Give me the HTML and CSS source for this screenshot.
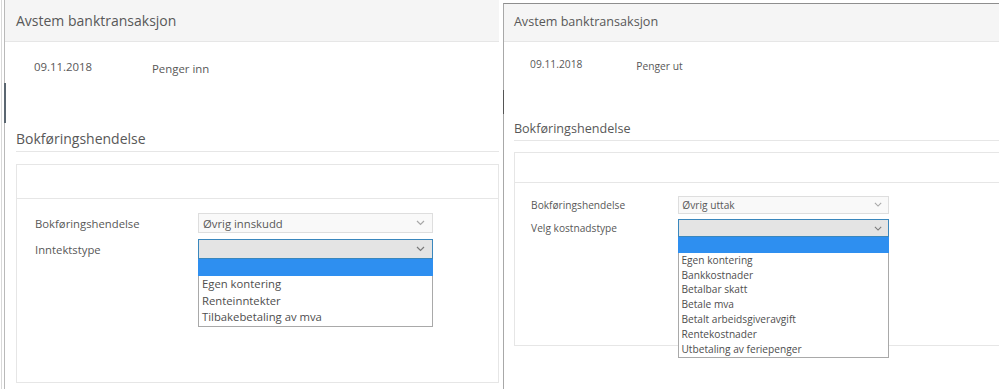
FILE: index.html
```html
<!DOCTYPE html>
<html lang="no">
<head>
    <meta charset="UTF-8">
    <meta name="viewport" content="width=device-width, initial-scale=1.0">
    <title>Avstem banktransaksjon</title>
    <link rel="stylesheet" href="styles.css">
</head>
<body>

<div class="shots">
    <!-- Penger inn -->
    <section class="shot shot-in">
        <div class="frame">
            <div class="modal">
                <div class="modal-header">Avstem banktransaksjon</div>
                <div class="summary">
                    <span class="date">09.11.2018</span>
                    <span class="direction">Penger inn</span>
                </div>
                <h2 class="section-title">Bokføringshendelse</h2>
                <div class="event-box">
                    <div class="event-box-top"></div>
                    <div class="event-form">
                        <div class="field">
                            <label>Bokføringshendelse</label>
                            <div class="select">
                                <span>Øvrig innskudd</span>
                                <svg class="chevron" width="9" height="6" viewBox="0 0 9 6"><path d="M1 1l3.5 3.5L8 1" fill="none" stroke="currentColor" stroke-width="1.2"/></svg>
                            </div>
                        </div>
                        <div class="field">
                            <label>Inntektstype</label>
                            <div class="select-wrap">
                                <div class="select is-open">
                                    <span></span>
                                    <svg class="chevron" width="9" height="6" viewBox="0 0 9 6"><path d="M1 1l3.5 3.5L8 1" fill="none" stroke="currentColor" stroke-width="1.2"/></svg>
                                </div>
                                <ul class="options">
                                    <li class="selected"></li>
                                    <li>Egen kontering</li>
                                    <li>Renteinntekter</li>
                                    <li>Tilbakebetaling av mva</li>
                                </ul>
                            </div>
                        </div>
                    </div>
                </div>
            </div>
        </div>
    </section>

    <!-- Penger ut -->
    <section class="shot shot-out">
        <div class="modal">
            <div class="modal-header">Avstem banktransaksjon</div>
            <div class="summary">
                <span class="date">09.11.2018</span>
                <span class="direction">Penger ut</span>
            </div>
            <h2 class="section-title">Bokføringshendelse</h2>
            <div class="event-box">
                <div class="event-box-top"></div>
                <div class="event-form">
                    <div class="field">
                        <label>Bokføringshendelse</label>
                        <div class="select">
                            <span>Øvrig uttak</span>
                            <svg class="chevron" width="9" height="6" viewBox="0 0 9 6"><path d="M1 1l3.5 3.5L8 1" fill="none" stroke="currentColor" stroke-width="1.2"/></svg>
                        </div>
                    </div>
                    <div class="field">
                        <label>Velg kostnadstype</label>
                        <div class="select-wrap">
                            <div class="select is-open">
                                <span></span>
                                <svg class="chevron" width="9" height="6" viewBox="0 0 9 6"><path d="M1 1l3.5 3.5L8 1" fill="none" stroke="currentColor" stroke-width="1.2"/></svg>
                            </div>
                            <ul class="options">
                                <li class="selected"></li>
                                <li>Egen kontering</li>
                                <li>Bankkostnader</li>
                                <li>Betalbar skatt</li>
                                <li>Betale mva</li>
                                <li>Betalt arbeidsgiveravgift</li>
                                <li>Rentekostnader</li>
                                <li>Utbetaling av feriepenger</li>
                            </ul>
                        </div>
                    </div>
                </div>
            </div>
        </div>
    </section>
</div>

</body>
</html>
```

FILE: styles.css
```css
body {
    font-family: "Open Sans", "Liberation Sans", Arial, sans-serif;
    background-color: white;
    color: #585858;
    margin: 0;
}
.shots {
    display: flex;
    width: 999px;
    height: 389px;
    overflow: hidden;
}

/* screenshot frames */
.shot-in {
    margin-left: 1px;
    margin-right: 4px;
    padding-left: 2px;
    border-left: 1px solid #d9d9d9;
}
.shot-in .frame {
    position: relative;
    width: 494px;
    height: 389px;
    border-left: 1px solid #b9b9b9;
}
.shot-in .frame::before {
    content: "";
    position: absolute;
    left: -1px;
    top: 83px;
    width: 2px;
    height: 40px;
    background-color: #5a6670;
}
.shot-out {
    position: relative;
    flex: 1;
    margin-top: 3px;
    border-top: 1px solid #8e8e8e;
    border-left: 1px solid #a8a8a8;
}
.shot-out::before {
    content: "";
    position: absolute;
    left: -1px;
    top: 86px;
    width: 1px;
    height: 24px;
    background-color: #555;
}
.shot-out .modal {
    zoom: 0.9;
    width: 570px;
}

/* modal */
.modal-header {
    height: 41px;
    line-height: 41px;
    padding-left: 11px;
    font-size: 14px;
    background-color: #f5f5f5;
    border-bottom: 1px solid #e6e6e6;
}
.summary {
    display: flex;
    align-items: flex-start;
    height: 85px;
    box-sizing: border-box;
    padding: 17px 0 0 29px;
    font-size: 11.4px;
    line-height: 16px;
}
.summary .date {
    width: 118px;
}
.summary .direction {
    margin-top: 2px;
}
.section-title {
    margin: 0 0 0 11px;
    padding: 1px 0 1px;
    font-size: 14px;
    font-weight: normal;
    line-height: 22px;
    border-bottom: 1px solid #e6e6e6;
}
.event-box {
    margin: 12px 0 0 11px;
    height: 219px;
    box-sizing: border-box;
    border: 1px solid #e6e6e6;
}
.shot-out .event-box {
    height: 216px;
}
.event-box-top {
    height: 33px;
    border-bottom: 1px solid #e6e6e6;
}
.event-form {
    padding: 14px 0 0 18px;
}
.field {
    display: flex;
    align-items: center;
    margin-bottom: 6px;
    font-size: 11.3px;
}
.field label {
    width: 163px;
}

/* select boxes */
.select-wrap {
    position: relative;
}
.select {
    display: flex;
    align-items: center;
    justify-content: space-between;
    width: 235px;
    height: 20px;
    box-sizing: border-box;
    padding: 0 7px 0 4px;
    background-color: #f9f9f9;
    border: 1px solid #dedede;
}
.select .chevron {
    color: #a8a8a8;
}
.select.is-open {
    background-color: #e4e4e4;
    border-color: #3a87bd;
}
.select.is-open .chevron {
    color: #7a7a7a;
}
.options {
    position: absolute;
    top: 100%;
    left: 0;
    width: 235px;
    box-sizing: border-box;
    margin: 0;
    padding: 0;
    list-style: none;
    background-color: white;
    border: 1px solid #a9a9a9;
    border-top: none;
}
.options li {
    height: 16.5px;
    line-height: 16.5px;
    padding-left: 3px;
    color: #4e4e4e;
    white-space: nowrap;
}
.options li.selected {
    height: 17px;
    margin: 0 -1px;
    background-color: #2e8ff0;
}
```
